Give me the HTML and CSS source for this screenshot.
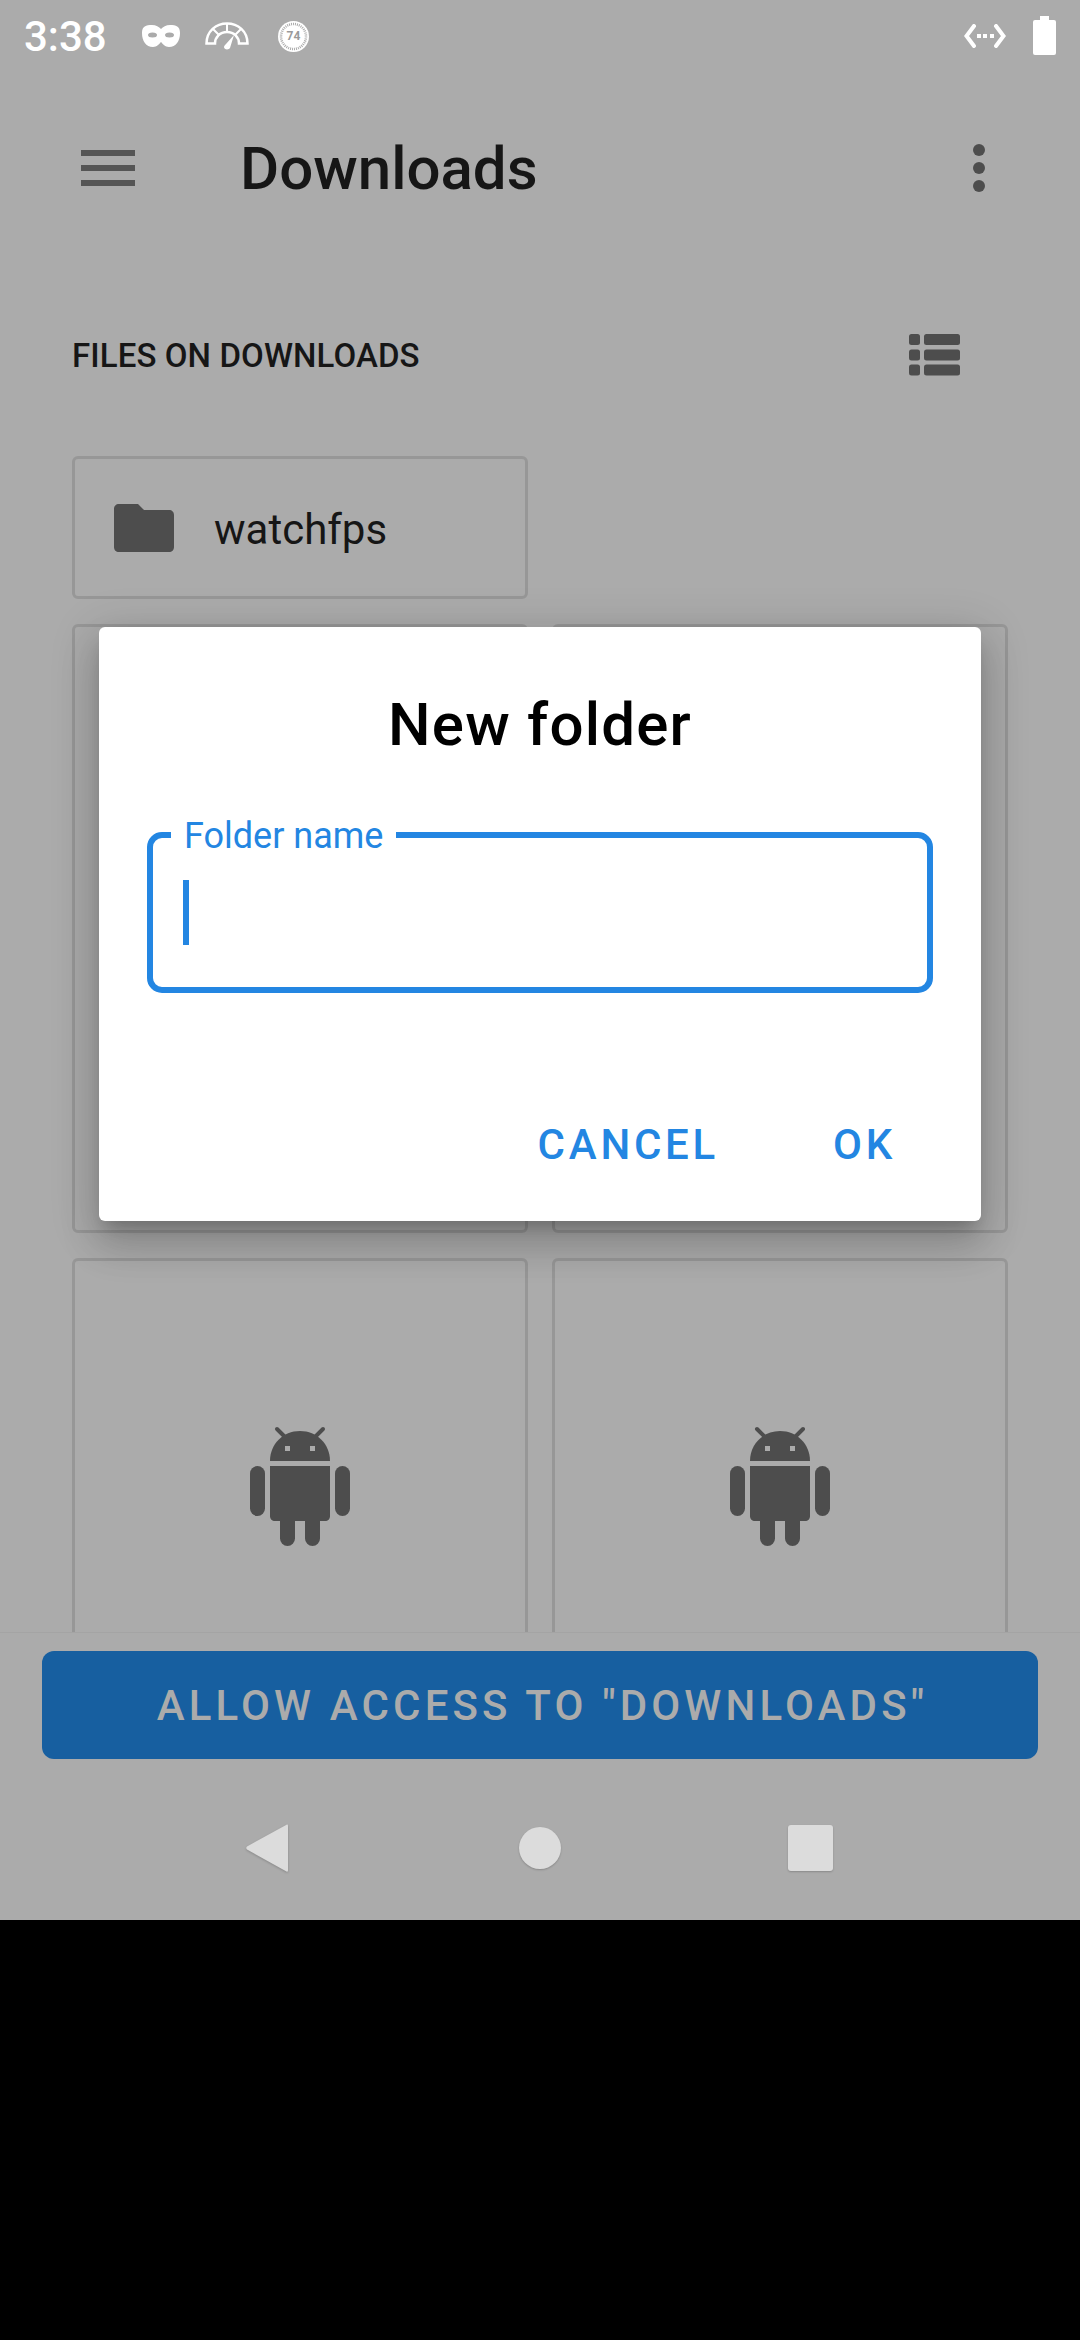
FILE: index.html
```html
<!DOCTYPE html>
<html lang="en">
<head>
  <meta charset="UTF-8" />
  <meta name="viewport" content="width=device-width, initial-scale=1.0"/>
  <title>Downloads</title>
  <link rel="stylesheet" href="styles.css">
</head>
<body>
  <div class="screen">

    <div class="status-bar">
      <span class="clock">3:38</span>
      <svg class="ic-mask" width="38" height="22" viewBox="0 0 38 22">
        <path fill="#fff" d="M10 0C14 0 17 2 19 4C21 2 24 0 28 0C34 0 38 1 38 8C38 16 34 22 27 22C23 22 21 19 19 17C17 19 15 22 11 22C4 22 0 16 0 8C0 1 4 0 10 0Z"/>
        <ellipse cx="10.5" cy="10" rx="4.5" ry="2.5" fill="#ababab"/>
        <ellipse cx="27.5" cy="10" rx="4.5" ry="2.5" fill="#ababab"/>
      </svg>
      <svg class="ic-gauge" width="44" height="28" viewBox="0 0 44 28">
        <path fill="none" stroke="#fff" stroke-width="2.5" d="M1.5 21.5H10C10 15 15 10 22 10C29 10 34 15 34 21.5H42.5C42.5 9 33 1.5 22 1.5C11 1.5 1.5 9 1.5 21.5Z"/>
        <path fill="none" stroke="#fff" stroke-width="2" d="M22 1.5V10M8 7L14 13M36 7L30 13"/>
        <path fill="#fff" d="M29 13L25 26C24 28 19 28 19 25C19 24 20 23 21 22Z"/>
      </svg>
      <div class="ic-temp">
        <svg class="ic-temp-ring" width="31" height="31" viewBox="0 0 31 31">
          <circle cx="15.5" cy="15.5" r="15.5" fill="#fff"/>
          <circle cx="15.5" cy="15.5" r="12.5" fill="none" stroke="#ababab" stroke-width="2.5" stroke-dasharray="1 1"/>
        </svg>
        <span class="ic-temp-num">74</span>
      </div>
      <svg class="ic-code" width="42" height="24" viewBox="0 0 42 24">
        <path fill="none" stroke="#fff" stroke-width="4" stroke-linecap="round" d="M10 2L2.5 12L10 22M32 2L39.500 12L32 22"/>
        <path fill="#fff" d="M13 10h4v4h-4zM19 10h4v4h-4zM26 10h4v4h-4z"/>
      </svg>
      <div class="ic-battery"></div>
    </div>

    <header class="toolbar">
      <div class="menu-icon"><span></span><span></span><span></span></div>
      <h1>Downloads</h1>
      <div class="more-icon"><span></span><span></span><span></span></div>
    </header>

    <div class="section-head">
      <span>FILES ON DOWNLOADS</span>
      <svg width="51" height="42" viewBox="0 0 51 42">
        <g fill="#4d4d4d">
          <rect x="0" y="0" width="11" height="11" rx="2.500"/>
          <rect x="15" y="0" width="36" height="11" rx="2.500"/>
          <rect x="0" y="15.500" width="11" height="11" rx="2.500"/>
          <rect x="15" y="15.500" width="36" height="11" rx="2.500"/>
          <rect x="0" y="30.500" width="11" height="11" rx="2.500"/>
          <rect x="15" y="30.500" width="36" height="11" rx="2.500"/>
        </g>
      </svg>
    </div>

    <main class="files">
      <div class="grid">
        <div class="card folder">
          <svg width="60" height="48" viewBox="0 0 60 48">
            <path fill="#4d4d4d" d="M5 0H24L30 6H55C58 6 60 8 60 11V43C60 46 58 48 55 48H5C2 48 0 46 0 43V5C0 2 2 0 5 0Z"/>
          </svg>
          <span>watchfps</span>
        </div>
        <div></div>
        <div class="card file"></div>
        <div class="card file"></div>
        <div class="card file">
          <svg class="android" width="100" height="120" viewBox="0 0 100 120"><use href="#android"/></svg>
        </div>
        <div class="card file">
          <svg class="android" width="100" height="120" viewBox="0 0 100 120"><use href="#android"/></svg>
        </div>
      </div>
    </main>

    <div class="bottom-bar">
      <div class="allow-btn">ALLOW ACCESS TO "DOWNLOADS"</div>
      <nav class="nav-bar">
        <svg class="nav-back" width="60" height="48" viewBox="0 0 60 48">
          <path fill="#dcdcdc" d="M47 0.500C47.500 0.200 48 0.800 48 2V46C48 47.500 47.500 48 46.500 47.500L7 25.500C6 24.800 6 23.200 7 22.500Z"/>
        </svg>
        <div class="nav-home"></div>
        <div class="nav-recent"></div>
      </nav>
    </div>

    <div class="dialog">
      <h2>New folder</h2>
      <div class="field">
        <label>Folder name</label>
        <div class="caret"></div>
      </div>
      <div class="actions">
        <span>CANCEL</span>
        <span>OK</span>
      </div>
    </div>

  </div>

  <svg class="defs" width="0" height="0">
    <defs>
      <g id="android" fill="#4d4d4d">
        <path d="M20 35C20 18 33 5 50 5C67 5 80 18 80 35Z"/>
        <path fill-rule="evenodd" d="M35 20v5h5v-5zM60 20v5h5v-5z" fill="#ababab"/>
        <path d="M20 40H80V90C80 93 78 95 75 95H25C22 95 20 93 20 90Z"/>
        <rect x="0" y="40" width="15" height="50" rx="7.500"/>
        <rect x="85" y="40" width="15" height="50" rx="7.500"/>
        <path d="M30 90H45V112.500A7.500 7.500 0 0 1 30 112.500Z"/>
        <path d="M55 90H70V112.500A7.500 7.500 0 0 1 55 112.500Z"/>
        <path d="M27 3L37 13M73 3L63 13" stroke="#4d4d4d" stroke-width="4" stroke-linecap="round"/>
      </g>
    </defs>
  </svg>
</body>
</html>
```

FILE: styles.css
```css
body {
  margin: 0;
  background: #000;
  font-family: Roboto, 'Noto Sans', sans-serif;
  color: #161616;
}
.screen {
  position: relative;
  width: 1080px;
  height: 1920px;
  background: #ababab;
  display: flex;
  flex-direction: column;
  overflow: hidden;
}
.defs {
  position: absolute;
}

/* status bar */
.status-bar {
  height: 72px;
  display: flex;
  align-items: center;
  padding: 0 24px;
  box-sizing: border-box;
  color: #fff;
}
.clock {
  font-size: 42px;
  font-weight: 500;
  width: 118px;
}
.ic-gauge {
  margin-left: 25px;
}
.ic-temp {
  position: relative;
  width: 31px;
  height: 31px;
  margin-left: 29px;
}
.ic-temp-ring {
  display: block;
}
.ic-temp-num {
  position: absolute;
  inset: 0;
  display: flex;
  align-items: center;
  justify-content: center;
  font-size: 12px;
  font-weight: 700;
  color: #9a9a9a;
}
.ic-code {
  margin-left: auto;
}
.ic-battery {
  position: relative;
  width: 23px;
  height: 35px;
  margin: 0 0 -1px 27px;
  top: 1px;
  background: #fff;
  border-radius: 2px;
}
.ic-battery::before {
  content: "";
  position: absolute;
  top: -4px;
  left: 7px;
  width: 9px;
  height: 4px;
  background: #fff;
}

/* toolbar */
.toolbar {
  height: 192px;
  display: flex;
  align-items: center;
  padding: 0 95px 0 81px;
  flex-shrink: 0;
}
.toolbar h1 {
  margin: 0 0 0 105px;
  font-size: 60px;
  font-weight: 500;
  flex: 1;
}
.menu-icon {
  width: 54px;
  display: flex;
  flex-direction: column;
  gap: 9px;
}
.menu-icon span {
  height: 6px;
  background: #555;
}
.more-icon {
  display: flex;
  flex-direction: column;
  gap: 6px;
}
.more-icon span {
  width: 12px;
  height: 12px;
  border-radius: 50%;
  background: #4d4d4d;
}

/* section heading */
.section-head {
  height: 182px;
  display: flex;
  align-items: center;
  justify-content: space-between;
  padding: 0 120px 0 72px;
  flex-shrink: 0;
  font-size: 33px;
  font-weight: 500;
  letter-spacing: 0.1px;
}

/* file grid */
.files {
  flex: 1;
  min-height: 0;
  overflow: hidden;
  padding: 10px 72px 0;
}
.grid {
  display: grid;
  grid-template-columns: 456px 456px;
  grid-template-rows: 143px 609px 609px;
  gap: 25px 24px;
}
.card {
  box-sizing: border-box;
  border: 3px solid #979797;
  border-radius: 6px;
}
.folder {
  display: flex;
  align-items: center;
  padding: 0 0 0 39px;
  gap: 40px;
  font-size: 42px;
}
.folder span {
  padding-top: 4px;
}
.file {
  display: flex;
  justify-content: center;
  padding-top: 165px;
}

/* bottom action + nav */
.bottom-bar {
  height: 288px;
  flex-shrink: 0;
  padding: 18px 42px 0;
  box-sizing: border-box;
  border-top: 1px solid #a4a4a4;
}
.allow-btn {
  height: 108px;
  padding-left: 5px;
  background: #175fa0;
  border-radius: 12px;
  color: #ababab;
  font-size: 42px;
  font-weight: 500;
  letter-spacing: 4.15px;
  display: flex;
  align-items: center;
  justify-content: center;
}
.nav-bar {
  display: grid;
  grid-template-columns: 270px 270px 270px;
  justify-content: center;
  justify-items: center;
  align-items: center;
  height: 48px;
  margin: 65px -42px 0;
}
.nav-back {
  filter: drop-shadow(0 1px 1px rgba(0,0,0,0.2));
}
.nav-home {
  width: 42px;
  height: 42px;
  border-radius: 50%;
  background: #dcdcdc;
  box-shadow: 0 1px 2px rgba(0,0,0,0.2);
}
.nav-recent {
  width: 45px;
  height: 46px;
  border-radius: 3px;
  background: #dcdcdc;
  box-shadow: 0 1px 2px rgba(0,0,0,0.2);
}

/* dialog */
.dialog {
  position: absolute;
  left: 99px;
  top: 627px;
  width: 882px;
  height: 594px;
  box-sizing: border-box;
  padding: 0 48px;
  background: #fff;
  border-radius: 6px;
  box-shadow: 0 24px 38px 3px rgba(0,0,0,0.14), 0 9px 46px 8px rgba(0,0,0,0.12), 0 11px 15px -7px rgba(0,0,0,0.2);
  display: flex;
  flex-direction: column;
}
.dialog h2 {
  margin: 0;
  height: 205px;
  box-sizing: border-box;
  padding-top: 63px;
  text-align: center;
  color: #000;
  font-size: 60px;
  line-height: 70px;
  font-weight: 500;
  letter-spacing: 1.2px;
}
.field {
  position: relative;
  height: 161px;
  box-sizing: border-box;
  border: 6px solid #2386e2;
  border-radius: 15px;
}
.field label {
  position: absolute;
  left: 18px;
  top: -22px;
  padding: 0 13px;
  background: #fff;
  color: #2386e2;
  font-size: 36px;
  line-height: 40px;
}
.caret {
  position: absolute;
  left: 30px;
  top: 42px;
  width: 6px;
  height: 65px;
  background: #2386e2;
}
.actions {
  display: flex;
  justify-content: flex-end;
  gap: 114px;
  padding: 0 37px 0 0;
  margin-top: 127px;
  color: #2386e2;
  font-size: 42px;
  line-height: 50px;
  font-weight: 500;
  letter-spacing: 3.75px;
}
```
